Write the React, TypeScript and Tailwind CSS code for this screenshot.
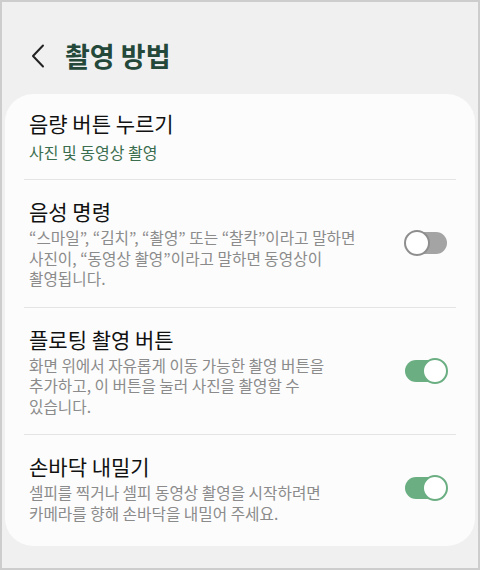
import React from "react";

const font = { fontFamily: '"Noto Sans CJK KR", "Noto Sans", sans-serif' };

function Toggle({ on }: { on: boolean }) {
  return (
    <div className="relative w-[44px] h-[26px] shrink-0">
      <div
        className={`absolute left-[1px] right-[1px] top-[2px] h-[22px] rounded-full ${
          on ? "bg-[#6aae82]" : "bg-[#a4a4a4]"
        }`}
      />
      <div
        className={`absolute top-0 w-[26px] h-[26px] rounded-full bg-white border-2 ${
          on ? "right-0 border-[#6aae82]" : "left-0 border-[#8e8e8e]"
        }`}
      />
    </div>
  );
}

function Row({
  title,
  lines,
  toggle,
  last,
}: {
  title: string;
  lines: string[];
  toggle: boolean;
  last?: boolean;
}) {
  return (
    <div
      className={`flex items-center justify-between pt-[17px] ${
        last ? "pb-[22px]" : "pb-[17px] border-b border-[#e4e4e4]"
      }`}
    >
      <div className="pl-[5px] flex flex-col gap-[3px]">
        <div className="text-[21px] leading-[28px] text-[#111111]">{title}</div>
        <div className="text-[15.7px] leading-[20.5px] text-[#8b8b8b]">
          {lines.map((l) => (
            <div key={l}>{l}</div>
          ))}
        </div>
      </div>
      <div className="pr-[8px]">
        <Toggle on={toggle} />
      </div>
    </div>
  );
}

export default function App() {
  return (
    <div
      className="w-[480px] h-[570px] bg-[#f0f0f0] border-2 border-[#cdcdcd] box-border px-[3px] overflow-hidden"
      style={font}
    >
      <div className="h-[92px] pt-[16px] flex items-center pl-[25px] gap-[15px]">
        <svg width="20" height="24" viewBox="0 0 20 24" fill="none">
          <path d="M13 1.5 L3 12 L13 22.5" stroke="#222" strokeWidth="2" strokeLinecap="round" strokeLinejoin="round" />
        </svg>
        <h1 className="text-[27px] leading-[34px] font-bold text-[#24483a]">촬영 방법</h1>
      </div>

      <div className="bg-[#fcfcfc] rounded-[28px] px-[19px]">
        <div className="pt-[15px] pb-[16px] pl-[5px] border-b border-[#e4e4e4] flex flex-col gap-[5px]">
          <div className="text-[21px] leading-[28px] text-[#111111]">음량 버튼 누르기</div>
          <div className="text-[16px] leading-[21px] text-[#3b6e4f]">사진 및 동영상 촬영</div>
        </div>
        <Row
          title="음성 명령"
          lines={[
            "“스마일”, “김치”, “촬영” 또는 “찰칵”이라고 말하면",
            "사진이, “동영상 촬영”이라고 말하면 동영상이",
            "촬영됩니다.",
          ]}
          toggle={false}
        />
        <Row
          title="플로팅 촬영 버튼"
          lines={[
            "화면 위에서 자유롭게 이동 가능한 촬영 버튼을",
            "추가하고, 이 버튼을 눌러 사진을 촬영할 수",
            "있습니다.",
          ]}
          toggle={true}
        />
        <Row
          title="손바닥 내밀기"
          lines={[
            "셀피를 찍거나 셀피 동영상 촬영을 시작하려면",
            "카메라를 향해 손바닥을 내밀어 주세요.",
          ]}
          toggle={true}
          last
        />
      </div>
    </div>
  );
}
